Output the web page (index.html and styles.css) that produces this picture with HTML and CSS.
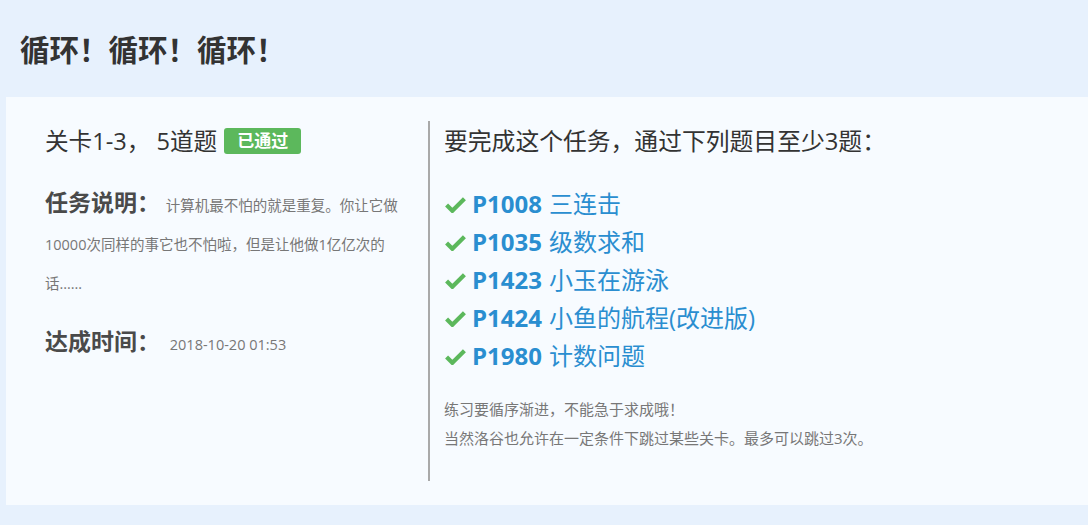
FILE: index.html
```html
<!DOCTYPE html>
<html lang="zh">
<head>
<meta charset="utf-8">
<link rel="stylesheet" href="styles.css">
</head>
<body>
<header class="page-header">
  <h1 class="page-title">循环！循环！循环！</h1>
</header>
<main class="card">
  <section class="col-left">
    <div class="stage">关卡1-3， 5道题 <span class="badge">已通过</span></div>
    <p class="desc"><strong class="label">任务说明：</strong> 计算机最不怕的就是重复。你让它做10000次同样的事它也不怕啦，但是让他做1亿亿次的话……</p>
    <p class="time"><strong class="label">达成时间：</strong> <span class="time-val">2018-10-20 01:53</span></p>
  </section>
  <div class="divider"></div>
  <section class="col-right">
    <div class="req">要完成这个任务，通过下列题目至少3题：</div>
    <ul class="problems">
      <li><svg class="check" viewBox="0 0 20 16"><path d="M1.5 8.5 L7 14 L18.5 2.5" fill="none" stroke="#5cb85c" stroke-width="4"/></svg><b>P1008</b> 三连击</li>
      <li><svg class="check" viewBox="0 0 20 16"><path d="M1.5 8.5 L7 14 L18.5 2.5" fill="none" stroke="#5cb85c" stroke-width="4"/></svg><b>P1035</b> 级数求和</li>
      <li><svg class="check" viewBox="0 0 20 16"><path d="M1.5 8.5 L7 14 L18.5 2.5" fill="none" stroke="#5cb85c" stroke-width="4"/></svg><b>P1423</b> 小玉在游泳</li>
      <li><svg class="check" viewBox="0 0 20 16"><path d="M1.5 8.5 L7 14 L18.5 2.5" fill="none" stroke="#5cb85c" stroke-width="4"/></svg><b>P1424</b> 小鱼的航程(改进版)</li>
      <li><svg class="check" viewBox="0 0 20 16"><path d="M1.5 8.5 L7 14 L18.5 2.5" fill="none" stroke="#5cb85c" stroke-width="4"/></svg><b>P1980</b> 计数问题</li>
    </ul>
    <p class="note">练习要循序渐进，不能急于求成哦！</p>
    <p class="note">当然洛谷也允许在一定条件下跳过某些关卡。最多可以跳过3次。</p>
  </section>
</main>
</body>
</html>
```

FILE: styles.css
```css
* { box-sizing: border-box; }
html, body { margin: 0; padding: 0; }
body {
  background: #e7f1fd;
  font-family: "Open Sans", "Noto Sans CJK SC", sans-serif;
  color: #333;
  height: 525px;
  overflow: hidden;
}
.page-header {
  height: 97px;
  padding: 31px 0 0 20px;
}
.page-title {
  margin: 0;
  font-size: 29.5px;
  line-height: 38px;
  font-weight: 700;
  color: #333;
}
.card {
  margin-left: 6px;
  height: 408px;
  background: #f7fbff;
  display: flex;
  align-items: flex-start;
  padding-top: 24px;
}
.col-left {
  width: 422px;
  padding: 4px 18px 0 39px;
}
.stage {
  font-size: 23.6px;
  line-height: 32px;
  color: #333;
  display: flex;
  align-items: center;
}
.badge {
  display: inline-block;
  margin-left: 7px;
  background: #5cb85c;
  color: #fff;
  font-weight: 700;
  font-size: 17px;
  line-height: 26px;
  padding: 0 13px;
  border-radius: 3px;
}
.desc {
  margin: 26px 0 0 0;
  font-size: 14.5px;
  line-height: 39px;
  color: #777;
}
.label {
  font-size: 23px;
  font-weight: 700;
  color: #4a4a4a;
  margin-right: 2px;
}
.time {
  margin: 22px 0 0 0;
  font-size: 14.5px;
  line-height: 32px;
  color: #777;
}
.time-val { margin-left: 4px; }
.divider {
  width: 2px;
  height: 360px;
  background: #a9a9a9;
  flex-shrink: 0;
}
.col-right {
  padding: 4px 0 0 14px;
}
.req {
  font-size: 23.8px;
  line-height: 32px;
  color: #333;
}
.problems {
  list-style: none;
  margin: 28px 0 0 0;
  padding: 0;
}
.problems li {
  font-size: 24px;
  line-height: 38px;
  color: #2a8ed0;
  display: flex;
  align-items: center;
}
.problems b { font-weight: 700; margin-right: 7px; }
.check {
  width: 21px;
  height: 17px;
  margin-right: 6px;
  margin-left: 1px;
}
.note {
  margin: 0;
  font-size: 15px;
  line-height: 29px;
  color: #777;
}
.problems + .note { margin-top: 20px; }
```
